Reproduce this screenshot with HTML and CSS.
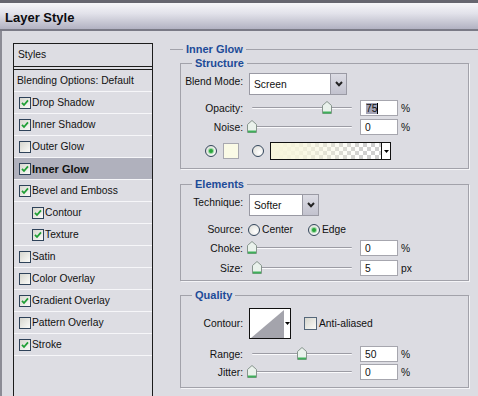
FILE: index.html
```html
<!DOCTYPE html>
<html>
<head>
  <meta charset="UTF-8">
  <title>Layer Style</title>
  <link rel="stylesheet" href="styles.css">
</head>
<body>
  <div class="dialog">
    <div class="titlebar">Layer Style</div>

    <div class="dialog-body">
      <!-- left list of effects -->
      <div class="styles-panel">
        <div class="styles-head">Styles</div>
        <ul class="style-list">
          <li class="style-item plain">Blending Options: Default</li>
          <li class="style-item"><span class="cb"><svg width="10" height="10" viewBox="0 0 10 10"><path d="M2 4.8l2 2.2 4-4.6" fill="none" stroke="#1f9f34" stroke-width="1.8"/></svg></span>Drop Shadow</li>
          <li class="style-item"><span class="cb"><svg width="10" height="10" viewBox="0 0 10 10"><path d="M2 4.8l2 2.2 4-4.6" fill="none" stroke="#1f9f34" stroke-width="1.8"/></svg></span>Inner Shadow</li>
          <li class="style-item"><span class="cb"></span>Outer Glow</li>
          <li class="style-item selected"><span class="cb"><svg width="10" height="10" viewBox="0 0 10 10"><path d="M2 4.8l2 2.2 4-4.6" fill="none" stroke="#1f9f34" stroke-width="1.8"/></svg></span>Inner Glow</li>
          <li class="style-item"><span class="cb"><svg width="10" height="10" viewBox="0 0 10 10"><path d="M2 4.8l2 2.2 4-4.6" fill="none" stroke="#1f9f34" stroke-width="1.8"/></svg></span>Bevel and Emboss</li>
          <li class="style-item sub"><span class="cb"><svg width="10" height="10" viewBox="0 0 10 10"><path d="M2 4.8l2 2.2 4-4.6" fill="none" stroke="#1f9f34" stroke-width="1.8"/></svg></span>Contour</li>
          <li class="style-item sub"><span class="cb"><svg width="10" height="10" viewBox="0 0 10 10"><path d="M2 4.8l2 2.2 4-4.6" fill="none" stroke="#1f9f34" stroke-width="1.8"/></svg></span>Texture</li>
          <li class="style-item"><span class="cb"></span>Satin</li>
          <li class="style-item"><span class="cb"></span>Color Overlay</li>
          <li class="style-item"><span class="cb"><svg width="10" height="10" viewBox="0 0 10 10"><path d="M2 4.8l2 2.2 4-4.6" fill="none" stroke="#1f9f34" stroke-width="1.8"/></svg></span>Gradient Overlay</li>
          <li class="style-item"><span class="cb"></span>Pattern Overlay</li>
          <li class="style-item"><span class="cb"><svg width="10" height="10" viewBox="0 0 10 10"><path d="M2 4.8l2 2.2 4-4.6" fill="none" stroke="#1f9f34" stroke-width="1.8"/></svg></span>Stroke</li>
        </ul>
      </div>

      <!-- Inner Glow settings -->
      <fieldset class="effect">
        <legend>Inner Glow</legend>

        <fieldset class="group">
          <legend>Structure</legend>
          <div class="row row-select first">
            <span class="lbl">Blend Mode:</span>
            <div class="select wide">
              <span class="select-text">Screen</span>
              <span class="select-btn"><svg width="8" height="6" viewBox="0 0 8 6"><polyline points="1,1 4,4.2 7,1" fill="none" stroke="#222" stroke-width="2"/></svg></span>
            </div>
          </div>
          <div class="row gap5">
            <span class="lbl">Opacity:</span>
            <div class="slider">
              <span class="track"></span>
              <span class="thumb" style="left: 75px"><svg width="10" height="13" viewBox="0 0 10 13"><path d="M.5 12.5V4.5L5 .5l4.5 4v8z" fill="#eaf2ec" stroke="#86948c"/><rect x="1" y="10.5" width="8" height="2" fill="#3faf5a"/></svg></span>
            </div>
            <span class="num"><span class="sel">75</span><span class="caret"></span></span>
            <span class="unit">%</span>
          </div>
          <div class="row gap3">
            <span class="lbl">Noise:</span>
            <div class="slider">
              <span class="track"></span>
              <span class="thumb" style="left: 0px"><svg width="10" height="13" viewBox="0 0 10 13"><path d="M.5 12.5V4.5L5 .5l4.5 4v8z" fill="#eaf2ec" stroke="#86948c"/><rect x="1" y="10.5" width="8" height="2" fill="#3faf5a"/></svg></span>
            </div>
            <span class="num">0</span>
            <span class="unit">%</span>
          </div>
          <div class="row color-row">
            <span class="radio on"></span>
            <span class="swatch"></span>
            <span class="radio second"></span>
            <div class="gradient">
              <span class="gradient-fill"></span>
              <span class="mini-arrow"><svg width="5" height="3" viewBox="0 0 5 3"><polygon points="0,0 5,0 2.5,3" fill="#000"/></svg></span>
            </div>
          </div>
        </fieldset>

        <fieldset class="group elements">
          <legend>Elements</legend>
          <div class="row row-select first">
            <span class="lbl">Technique:</span>
            <div class="select narrow">
              <span class="select-text">Softer</span>
              <span class="select-btn"><svg width="8" height="6" viewBox="0 0 8 6"><polyline points="1,1 4,4.2 7,1" fill="none" stroke="#222" stroke-width="2"/></svg></span>
            </div>
          </div>
          <div class="row source-row">
            <span class="lbl">Source:</span>
            <span class="opt center"><span class="radio"></span>Center</span>
            <span class="opt"><span class="radio on"></span>Edge</span>
          </div>
          <div class="row gap4">
            <span class="lbl">Choke:</span>
            <div class="slider">
              <span class="track"></span>
              <span class="thumb" style="left: 0px"><svg width="10" height="13" viewBox="0 0 10 13"><path d="M.5 12.5V4.5L5 .5l4.5 4v8z" fill="#eaf2ec" stroke="#86948c"/><rect x="1" y="10.5" width="8" height="2" fill="#3faf5a"/></svg></span>
            </div>
            <span class="num">0</span>
            <span class="unit">%</span>
          </div>
          <div class="row gap4">
            <span class="lbl">Size:</span>
            <div class="slider">
              <span class="track"></span>
              <span class="thumb" style="left: 5px"><svg width="10" height="13" viewBox="0 0 10 13"><path d="M.5 12.5V4.5L5 .5l4.5 4v8z" fill="#eaf2ec" stroke="#86948c"/><rect x="1" y="10.5" width="8" height="2" fill="#3faf5a"/></svg></span>
            </div>
            <span class="num">5</span>
            <span class="unit">px</span>
          </div>
        </fieldset>

        <fieldset class="group quality">
          <legend>Quality</legend>
          <div class="row contour-row">
            <span class="lbl">Contour:</span>
            <div class="contour">
              <svg width="34" height="29" viewBox="0 0 34 29"><polygon points="1,29 34,1 34,29" fill="#a4a4ac"/></svg>
              <span class="mini-arrow"><svg width="5" height="3" viewBox="0 0 5 3"><polygon points="0,0 5,0 2.5,3" fill="#000"/></svg></span>
            </div>
            <span class="cb big"></span>
            <span class="check-label">Anti-aliased</span>
          </div>
          <div class="row gap7">
            <span class="lbl">Range:</span>
            <div class="slider">
              <span class="track"></span>
              <span class="thumb" style="left: 50px"><svg width="10" height="13" viewBox="0 0 10 13"><path d="M.5 12.5V4.5L5 .5l4.5 4v8z" fill="#eaf2ec" stroke="#86948c"/><rect x="1" y="10.5" width="8" height="2" fill="#3faf5a"/></svg></span>
            </div>
            <span class="num">50</span>
            <span class="unit">%</span>
          </div>
          <div class="row gap2">
            <span class="lbl">Jitter:</span>
            <div class="slider">
              <span class="track"></span>
              <span class="thumb" style="left: 0px"><svg width="10" height="13" viewBox="0 0 10 13"><path d="M.5 12.5V4.5L5 .5l4.5 4v8z" fill="#eaf2ec" stroke="#86948c"/><rect x="1" y="10.5" width="8" height="2" fill="#3faf5a"/></svg></span>
            </div>
            <span class="num">0</span>
            <span class="unit">%</span>
          </div>
        </fieldset>
      </fieldset>
    </div>
  </div>
</body>
</html>
```

FILE: styles.css
```css
* {
  box-sizing: border-box;
}
body {
  margin: 0;
  font-family: "Liberation Sans", Arial, sans-serif;
  font-size: 10.3px;
  color: #111;
  background: #dcdce2;
}
.dialog {
  width: 478px;
  height: 396px;
  overflow: hidden;
  background: #dcdce2;
}
.titlebar {
  height: 31px;
  padding: 4px 0 0 5px;
  border-top: 3px solid #66666f;
  border-bottom: 2px solid #7a7a86;
  background: linear-gradient(#f6f6f9, #e2e2ea 40%, #b2b2c2);
  font-size: 13px;
  font-weight: bold;
  line-height: 22px;
  color: #0c0c10;
}
.dialog-body {
  display: flex;
  align-items: flex-start;
  height: 400px;
  padding: 12px 0 0 11px;
  border-left: 2px solid #8b8b95;
}

/* styles list */
.styles-panel {
  flex: none;
  width: 140px;
  height: 400px;
  border: 1px solid #1c1c1c;
  background: #dddde3;
}
.styles-head {
  height: 23px;
  line-height: 22px;
  padding-left: 4px;
  border-bottom: 1px solid #1c1c1c;
}
.style-list {
  list-style: none;
  margin: 2px 0 0;
  padding: 0;
  border-top: 1px solid #1c1c1c;
}
.style-item {
  display: flex;
  align-items: center;
  gap: 1px;
  height: 22px;
  padding-left: 5px;
  border-bottom: 1px solid #f6f6f9;
}
.style-item.plain {
  padding-left: 3px;
}
.style-item.sub {
  padding-left: 18px;
}
.style-item.selected {
  background: #b0b1bd;
  font-weight: bold;
  font-size: 11px;
}
.cb {
  flex: none;
  display: flex;
  align-items: center;
  justify-content: center;
  width: 12px;
  height: 12px;
  border: 1px solid #2e4259;
  background: linear-gradient(135deg, #d6d6ce, #fbfbf8);
}
.cb.big {
  width: 13px;
  height: 13px;
  margin-left: 13px;
  border-color: #55677a;
}

/* effect settings */
.effect {
  flex: none;
  width: 320px;
  min-width: 0;
  margin: 0 0 0 17px;
  padding: 0;
  border: 0;
  border-top: 1px solid #a2a2aa;
}
legend {
  padding: 0 3px;
  font-size: 11px;
  font-weight: bold;
  line-height: 13px;
  color: #1d4b98;
}
.effect > legend {
  margin-left: 13px;
}
.group {
  width: 289px;
  min-width: 0;
  margin: 1px 0 0 10px;
  padding: 0 0 9px;
  border: 1px solid #a2a2aa;
  box-shadow: 1px 1px 0 #f4f4f7;
}
.group > legend {
  margin-left: 11px;
}
.group.elements {
  margin-top: 9px;
  padding-bottom: 4px;
}
.group.quality {
  margin-top: 8px;
  padding-bottom: 7px;
}
.row {
  display: flex;
  align-items: center;
  height: 16px;
}
.row.first {
  margin-top: 3px;
}
.row.gap2 { margin-top: 2px; }
.row.gap3 { margin-top: 3px; }
.row.gap4 { margin-top: 4px; }
.row.gap5 { margin-top: 5px; }
.row.gap7 { margin-top: 7px; }
.row-select {
  height: 22px;
}
.lbl {
  flex: none;
  width: 62px;
  margin-right: 6px;
  text-align: right;
}
.row-select .lbl {
  align-self: flex-start;
  padding-top: 3px;
}

/* dropdowns */
.select {
  display: flex;
  height: 22px;
  border: 1px solid #9a9aa4;
  background: #fff;
}
.select.wide {
  width: 98px;
}
.select.narrow {
  width: 70px;
}
.select-text {
  flex: 1;
  padding: 5px 0 0 4px;
}
.select-btn {
  flex: none;
  display: flex;
  align-items: center;
  justify-content: center;
  width: 16px;
  border-left: 1px solid #9a9aa4;
  background: linear-gradient(#dcdce4, #c2c2ce);
}

/* sliders */
.slider {
  position: relative;
  flex: none;
  display: flex;
  align-items: center;
  width: 113px;
  height: 16px;
  margin-left: -2px;
  padding-left: 5px;
}
.track {
  width: 100px;
  height: 2px;
  border-top: 1px solid #9c9ca4;
  border-bottom: 1px solid #fafafc;
  border-radius: 1px;
}
.thumb {
  position: absolute;
  top: 1px;
  display: flex;
}
.num {
  flex: none;
  display: flex;
  align-items: center;
  width: 38px;
  height: 16px;
  padding-left: 4px;
  border: 1px solid #a6a6ae;
  background: #fff;
}
.sel {
  margin-left: 1px;
  background: #a4a4b6;
}
.caret {
  width: 1px;
  height: 11px;
  background: #000;
}
.unit {
  margin-left: 3px;
}

/* colour row */
.color-row {
  margin-top: 8px;
  padding-left: 24px;
}
.radio {
  flex: none;
  display: flex;
  width: 12px;
  height: 12px;
  border: 1px solid #34475d;
  border-radius: 50%;
  background: radial-gradient(circle at 65% 65%, #ffffff, #dadad4);
}
.radio.on::after {
  content: "";
  width: 4px;
  height: 4px;
  margin: 3px;
  border-radius: 50%;
  background: #2aa43c;
  box-shadow: 0 0 1px 1px #8fd49a;
}
.radio.second {
  margin-left: 13px;
}
.swatch {
  flex: none;
  width: 16px;
  height: 16px;
  margin-left: 6px;
  border: 1px solid #a8a8b0;
  background: #fafae6;
}
.gradient {
  flex: none;
  display: flex;
  width: 121px;
  height: 18px;
  margin-left: 6px;
  border: 1px solid #111;
  background: conic-gradient(#cfcfcf 25%, #fff 0 50%, #cfcfcf 0 75%, #fff 0) 0 0 / 8px 8px;
}
.gradient-fill {
  flex: 1;
  background: linear-gradient(to right, #f8f6dc, rgba(248, 246, 220, 0.85) 25%, rgba(248, 246, 220, 0) 85%);
}
.mini-arrow {
  flex: none;
  display: flex;
  align-items: center;
  justify-content: center;
  width: 9px;
  border-left: 1px solid #111;
  background: #fff;
}

/* source radios */
.source-row {
  height: 13px;
  margin-top: 7px;
}
.opt {
  display: flex;
  align-items: center;
  gap: 2px;
}
.opt.center {
  width: 60px;
  margin-left: -1px;
}

/* contour picker */
.contour-row {
  height: 31px;
  margin-top: 6px;
}
.contour {
  flex: none;
  display: flex;
  width: 42px;
  height: 31px;
  border: 1px solid #111;
  background: #fff;
}
.contour .mini-arrow {
  width: 6px;
  border-left: 0;
}
.check-label {
  margin-left: 2px;
}
```
